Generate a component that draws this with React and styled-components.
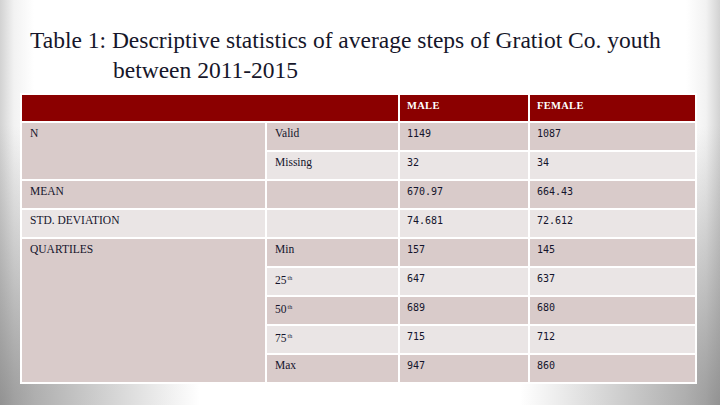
import React from "react";
import styled, { createGlobalStyle } from "styled-components";

const GlobalStyle = createGlobalStyle`
  html, body {
    margin: 0;
    padding: 0;
  }
  body {
    width: 720px;
    height: 405px;
    overflow: hidden;
  }
`;

const rows = [
  { group: "N", span: 2, sub: "Valid", male: "1149", female: "1087" },
  { sub: "Missing", male: "32", female: "34" },
  { group: "MEAN", span: 1, sub: "", male: "670.97", female: "664.43" },
  { group: "STD. DEVIATION", span: 1, sub: "", male: "74.681", female: "72.612" },
  { group: "QUARTILES", span: 5, sub: "Min", male: "157", female: "145" },
  { sub: "25", sup: "th", male: "647", female: "637" },
  { sub: "50", sup: "th", male: "689", female: "680" },
  { sub: "75", sup: "th", male: "715", female: "712" },
  { sub: "Max", male: "947", female: "860" },
];

export default function App() {
  let groupShade = 0;
  return (
    <Slide>
      <GlobalStyle />
      <Title>
        Table 1: Descriptive statistics of average steps of Gratiot Co. youth
        between 2011-2015
      </Title>
      <Table>
        <HeadCell $span={2} />
        <HeadCell>MALE</HeadCell>
        <HeadCell>FEMALE</HeadCell>
        {rows.map((r, i) => {
          const dark = i % 2 === 0;
          if (r.group) groupShade = i;
          return (
            <React.Fragment key={i}>
              {r.group && (
                <Cell $dark={groupShade % 2 === 0} $rows={r.span}>
                  {r.group}
                </Cell>
              )}
              <Cell $dark={dark}>
                {r.sub}
                {r.sup && <Sup>{r.sup}</Sup>}
              </Cell>
              <NumCell $dark={dark}>{r.male}</NumCell>
              <NumCell $dark={dark}>{r.female}</NumCell>
            </React.Fragment>
          );
        })}
      </Table>
    </Slide>
  );
}

const Slide = styled.div`
  width: 720px;
  height: 405px;
  box-sizing: border-box;
  padding-top: 25px;
  background:
    radial-gradient(ellipse 200px 280px at 0% 100%, rgba(125, 125, 125, 0.75), rgba(125, 125, 125, 0) 100%),
    radial-gradient(ellipse 200px 280px at 100% 100%, rgba(125, 125, 125, 0.75), rgba(125, 125, 125, 0) 100%),
    linear-gradient(
      to right,
      #d2d2d2 0px,
      #f2f2f2 14px,
      #ffffff 34px,
      #ffffff 686px,
      #f2f2f2 706px,
      #d2d2d2 720px
    );
`;

const Title = styled.h1`
  margin: 0 0 8px 0;
  padding-left: 113px;
  padding-right: 30px;
  text-indent: -83px;
  font-family: "Liberation Serif", "Times New Roman", serif;
  font-weight: 400;
  font-size: 23.5px;
  line-height: 30px;
  color: #16162a;
`;

const Table = styled.div`
  display: grid;
  grid-template-columns: 243px 131px 128px 165px;
  grid-template-rows: 26px repeat(9, 27px);
  gap: 2px;
  padding: 2px;
  margin-left: 20px;
  width: max-content;
  background: #ffffff;
`;

const HeadCell = styled.div`
  grid-column: span ${(p) => p.$span || 1};
  background: #8b0000;
  color: #ffffff;
  font-family: "Liberation Serif", serif;
  font-weight: bold;
  font-size: 10.5px;
  letter-spacing: 0.3px;
  padding: 5px 0 0 7px;
`;

const Cell = styled.div`
  grid-row: span ${(p) => p.$rows || 1};
  background: ${(p) => (p.$dark ? "#d9cbca" : "#eae5e5")};
  color: #14142c;
  font-family: "Liberation Serif", serif;
  font-size: 11.5px;
  line-height: 13px;
  padding: 4px 0 0 8px;
`;

const NumCell = styled(Cell)`
  font-family: "DejaVu Sans Mono", monospace;
  font-size: 10px;
  padding-left: 7px;
`;

const Sup = styled.sup`
  font-size: 6px;
  vertical-align: 4px;
  margin-left: 1px;
`;
